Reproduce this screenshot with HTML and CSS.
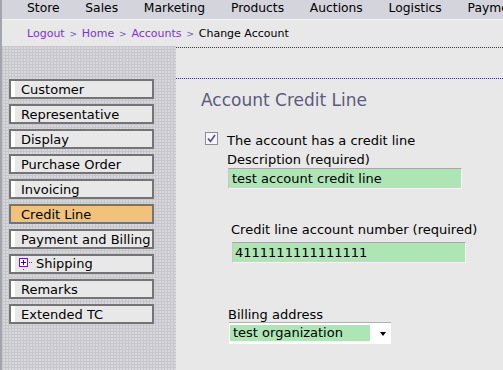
FILE: index.html
```html
<!DOCTYPE html>
<html lang="en">
  <head>
    <meta charset="UTF-8" />
    <title>Change Account</title>
    <link rel="stylesheet" href="styles.css">
  </head>

  <body>
    <div class="page">
      <div class="topnav">
        <span>Store</span>
        <span>Sales</span>
        <span>Marketing</span>
        <span>Products</span>
        <span>Auctions</span>
        <span>Logistics</span>
        <span>Payments</span>
      </div>
      <div class="crumbs">
        <a href="#">Logout</a><span class="sep">&gt;</span><a href="#">Home</a><span class="sep">&gt;</span><a href="#">Accounts</a><span class="sep">&gt;</span><span class="current">Change Account</span>
      </div>

      <div class="content">
        <div class="sidebar">
          <div class="tab">Customer</div>
          <div class="tab">Representative</div>
          <div class="tab">Display</div>
          <div class="tab">Purchase Order</div>
          <div class="tab">Invoicing</div>
          <div class="tab selected">Credit Line</div>
          <div class="tab">Payment and Billing</div>
          <div class="tab tree">
            <svg class="tree-icon" width="17" height="16" viewBox="0 0 17 16">
              <rect x="0.5" y="2.5" width="8" height="8" fill="#fff" stroke="#6a10d0" />
              <path d="M2 6.5h5M4.5 4v5" stroke="#3a0090" />
              <rect x="10" y="6" width="1" height="1" fill="#555" />
              <rect x="12" y="6" width="1" height="1" fill="#555" />
              <rect x="4" y="13" width="1" height="1" fill="#555" />
            </svg>Shipping
          </div>
          <div class="tab">Remarks</div>
          <div class="tab">Extended TC</div>
        </div>

        <div class="main">
          <div class="main-head"></div>
          <h2 class="title">Account Credit Line</h2>

          <div class="check-row">
            <span class="checkbox">
              <svg width="11" height="11" viewBox="0 0 11 11">
                <polyline points="2,5.5 4.5,8.5 9,2" fill="none" stroke="#4a4aa0" stroke-width="1.6" />
              </svg>
            </span>
            <span>The account has a credit line</span>
          </div>

          <div class="fields">
            <div class="label">Description (required)</div>
            <input class="field" type="text" value="test account credit line">

            <div class="group">
              <div class="label">Credit line account number (required)</div>
              <input class="field field-num" type="text" value="4111111111111111">
            </div>

            <div class="label billing">Billing address</div>
            <div class="select">
              <span class="select-value">test organization</span>
              <span class="arrow"></span>
            </div>
          </div>
        </div>
      </div>
    </div>
  </body>
</html>
```

FILE: styles.css
```css
body {
  margin: 0;
  font-family: "DejaVu Sans", Verdana, sans-serif;
  color: #000;
}

.page {
  min-height: 100vh;
  display: flex;
  flex-direction: column;
  border-left: 2px solid #a4a4ac;
  overflow: hidden;
}

.topnav {
  height: 19px;
  line-height: 17px;
  font-size: 12.3px;
  background: #d4d4dc;
  border-bottom: 1px solid #f4f4f6;
  padding-left: 25px;
  display: flex;
  gap: 25.8px;
  white-space: nowrap;
}

.crumbs {
  height: 24px;
  padding-top: 2px;
  line-height: 24px;
  font-size: 11px;
  background: #e8e8e8;
  padding-left: 25px;
  white-space: nowrap;
}

.crumbs a {
  color: #7a34d2;
  text-decoration: none;
}

.sep {
  font-size: 9px;
  color: #6a58c0;
  margin: 0 4.8px;
}

.content {
  flex: 1;
  display: flex;
}

.sidebar {
  width: 174px;
  padding-top: 33px;
  background-color: #d8d8dc;
  background-image: linear-gradient(90deg, #c6c6cc 1px, transparent 1px),
    linear-gradient(#c6c6cc 1px, transparent 1px);
  background-size: 3px 3px;
}

.tab {
  box-sizing: border-box;
  width: 145px;
  height: 20px;
  margin: 0 0 5px 7px;
  border: 2px solid #747474;
  background: linear-gradient(90deg, #fff 4px, #e8e8e8 4px);
  padding-left: 10px;
  padding-top: 1px;
  font-size: 13px;
  line-height: 15px;
  white-space: nowrap;
}

.tab.selected {
  background: #f0c27c;
}

.tab.tree {
  padding-left: 8px;
  padding-top: 0;
  line-height: 16px;
}

.tree-icon {
  vertical-align: top;
}

.main {
  flex: 1;
  background: #e8e8e8;
  padding-top: 1px;
  font-size: 13px;
}

.main-head {
  height: 30px;
  border-top: 1px dotted #3a2a8a;
  border-bottom: 1px dotted #3a2a8a;
}

.title {
  margin: 11px 0 0 25px;
  font-size: 17px;
  line-height: 20px;
  font-weight: normal;
  color: #5b5b7b;
}

.check-row {
  margin: 20px 0 0 29px;
  height: 20px;
  line-height: 21px;
  display: flex;
  gap: 9px;
}

.checkbox {
  box-sizing: border-box;
  width: 13px;
  height: 13px;
  margin-top: 2px;
  border: 1px solid #8c8c94;
  background: #f6f6f6;
  display: flex;
}

.fields {
  margin-left: 51px;
}

.label {
  line-height: 18px;
  padding-top: 1px;
  height: 17px;
}

.field {
  display: block;
  box-sizing: border-box;
  width: 234px;
  height: 21px;
  margin: 0 0 0 1px;
  padding: 0 3px;
  border: 1px solid #f4f4f4;
  border-top-color: #a8a8a8;
  border-left-color: #c8c8c8;
  background: #ade6b4;
  font: 13px "DejaVu Sans", Verdana, sans-serif;
  color: #000;
  outline: none;
}

.group {
  margin: 31px 0 0 4px;
}

.group .field {
  margin-top: 4px;
  padding-left: 2px;
}

.label.billing {
  margin: 43px 0 0 1px;
  line-height: 16px;
  height: 15px;
}

.select {
  box-sizing: border-box;
  width: 162px;
  height: 22px;
  margin-left: 2px;
  padding: 2px 1px;
  background: #fff;
  border-top: 1px solid #b0b0b0;
  display: flex;
  align-items: flex-start;
}

.select-value {
  width: 137px;
  height: 16px;
  line-height: 16px;
  padding-left: 3px;
  background: #ade6b4;
  white-space: nowrap;
}

.arrow {
  margin: 7px 0 0 10px;
  border-left: 3.5px solid transparent;
  border-right: 3.5px solid transparent;
  border-top: 4px solid #000;
}
```
